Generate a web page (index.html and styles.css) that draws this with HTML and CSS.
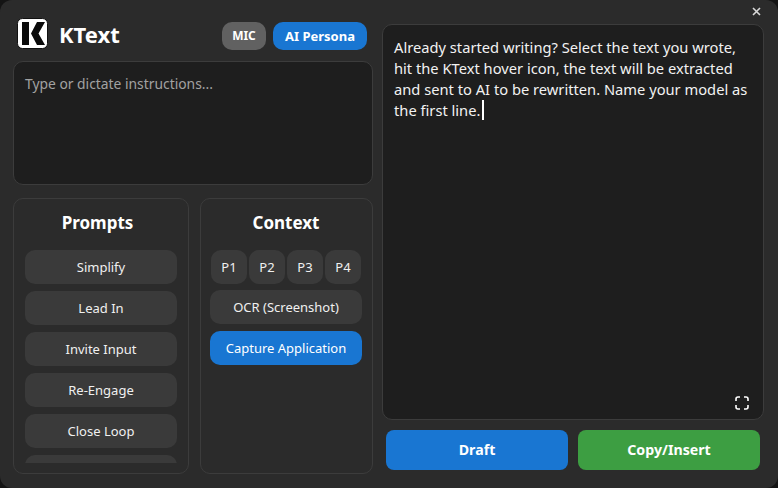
FILE: index.html
```html
<!DOCTYPE html>
<html>
    <head>
        <meta charset="utf-8">
        <title>KText</title>
        <link rel="stylesheet" href="styles.css">
    </head>
    <body>
    <div class="window">
        <button class="close">
            <svg width="9" height="9" viewBox="0 0 9 9"><path d="M1 1L8 8M8 1L1 8" stroke="#d8d8d8" stroke-width="1.6"/></svg>
        </button>
        <div class="left">
            <div class="header">
                <svg class="logo" width="31" height="31" viewBox="0 0 31 31">
                    <rect x="0.5" y="0.5" width="30" height="30" rx="5" fill="#fff" stroke="#111"/>
                    <path d="M5 4H12V27H5Z" fill="#0a0a0a"/>
                    <path d="M14 15.5L20 4H28L21.5 15.5L28 27H20Z" fill="#0a0a0a"/>
                </svg>
                <div class="title">KText</div>
                <button class="pill mic">MIC</button>
                <button class="pill persona">AI Persona</button>
            </div>
            <div class="instructions">Type or dictate instructions...</div>
            <div class="panels">
                <div class="panel prompts">
                    <h2>Prompts</h2>
                    <div class="promptlist">
                        <button class="btn">Simplify</button>
                        <button class="btn">Lead In</button>
                        <button class="btn">Invite Input</button>
                        <button class="btn">Re-Engage</button>
                        <button class="btn">Close Loop</button>
                        <button class="btn">&nbsp;</button>
                    </div>
                </div>
                <div class="panel context">
                    <h2>Context</h2>
                    <div class="pages">
                        <button class="btn">P1</button>
                        <button class="btn">P2</button>
                        <button class="btn">P3</button>
                        <button class="btn">P4</button>
                    </div>
                    <button class="btn ocr">OCR (Screenshot)</button>
                    <button class="btn capture">Capture Application</button>
                </div>
            </div>
        </div>
        <div class="right">
            <div class="editor">
                <p>Already started writing? Select the text you wrote, hit the KText hover icon, the text will be extracted and sent to AI to be rewritten. Name your model as the first line.<span class="caret"></span></p>
                <svg class="expand" width="14" height="14" viewBox="0 0 14 14" fill="none" stroke="#fff" stroke-width="1.6">
                    <path d="M1 5V3Q1 1 3 1H5M9 1H11Q13 1 13 3V5M13 9V11Q13 13 11 13H9M5 13H3Q1 13 1 11V9"/>
                </svg>
            </div>
            <div class="actions">
                <button class="action draft">Draft</button>
                <button class="action copy">Copy/Insert</button>
            </div>
        </div>
    </div>
    </body>
</html>
```

FILE: styles.css
```css
* {
    box-sizing: border-box;
}
html {
    background-color: #141414;
}
body {
    margin: 0;
    font-family: "Noto Sans", "Open Sans", sans-serif;
    color: #f2f2f2;
}
button {
    font-family: inherit;
    border: none;
    color: inherit;
    padding: 0;
}
.window {
    position: relative;
    display: flex;
    width: 778px;
    height: 488px;
    padding: 0 14px 14px 13px;
    gap: 9px;
    background-color: #2b2b2b;
    border-radius: 12px;
    overflow: hidden;
}
.close {
    position: absolute;
    top: 7px;
    right: 17px;
    width: 9px;
    height: 9px;
    background: none;
    display: flex;
}
.left {
    width: 360px;
    display: flex;
    flex-direction: column;
}
.header {
    height: 61px;
    display: flex;
    align-items: center;
    padding: 10px 6px 0 4px;
}
.logo {
    flex: none;
    margin-top: -4px;
}
.title {
    margin-left: 11px;
    margin-top: -3px;
    font-size: 22px;
    font-weight: 700;
    color: #fff;
    flex: 1;
}
.pill {
    height: 28px;
    border-radius: 10px;
    font-size: 13px;
    font-weight: 700;
    color: #fff;
}
.mic {
    width: 44px;
    font-size: 12px;
    background-color: #616161;
}
.persona {
    width: 94px;
    margin-left: 7px;
    background-color: #1976d2;
}
.instructions {
    height: 124px;
    padding: 11px 11px;
    background-color: #1e1e1e;
    border: 1px solid #3c3c3c;
    border-radius: 10px;
    font-size: 13.85px;
    line-height: 21px;
    color: #a2a2a2;
}
.panels {
    display: flex;
    gap: 11px;
    margin-top: 13px;
    height: 276px;
}
.panel {
    border: 1px solid #3c3c3c;
    border-radius: 10px;
    padding: 0 11px;
    overflow: hidden;
}
.prompts {
    width: 176px;
}
.prompts h2 {
    padding-right: 7px;
}
.context {
    width: 173px;
    padding: 0 10px 0 9px;
}
.panel h2 {
    margin: 0;
    height: 51px;
    padding-top: 12px;
    font-size: 17px;
    line-height: 24px;
    font-weight: 700;
    text-align: center;
    color: #fff;
}
.btn {
    display: block;
    width: 100%;
    height: 34px;
    background-color: #3a3a3a;
    border-radius: 10px;
    font-size: 13px;
    color: #f0f0f0;
}
.promptlist {
    height: 213px;
    overflow: hidden;
    display: flex;
    flex-direction: column;
    gap: 7px;
}
.promptlist .btn {
    flex: none;
}
.pages {
    display: flex;
    gap: 2px;
    padding: 0 1px;
}
.pages .btn {
    flex: 1;
}
.ocr {
    margin-top: 6px;
}
.capture {
    margin-top: 7px;
    background-color: #1976d2;
    color: #fff;
}
.right {
    width: 382px;
    padding-top: 24px;
    display: flex;
    flex-direction: column;
}
.editor {
    position: relative;
    height: 396px;
    padding: 13px 11px;
    background-color: #1e1e1e;
    border: 1px solid #3c3c3c;
    border-radius: 10px;
    font-size: 14.7px;
    line-height: 21px;
}
.editor p {
    margin: 0;
    margin-top: -1px;
}
.caret {
    display: inline-block;
    width: 2px;
    height: 20px;
    margin-left: 2px;
    vertical-align: -4px;
    background-color: #fff;
}
.expand {
    position: absolute;
    right: 14px;
    bottom: 9px;
}
.actions {
    display: flex;
    gap: 10px;
    padding: 10px 4px 0;
}
.action {
    flex: 1;
    height: 40px;
    padding-bottom: 2px;
    border-radius: 8px;
    font-size: 14.2px;
    font-weight: 700;
    color: #fff;
}
.draft {
    background-color: #1976d2;
}
.copy {
    background-color: #3d9e42;
}
```
